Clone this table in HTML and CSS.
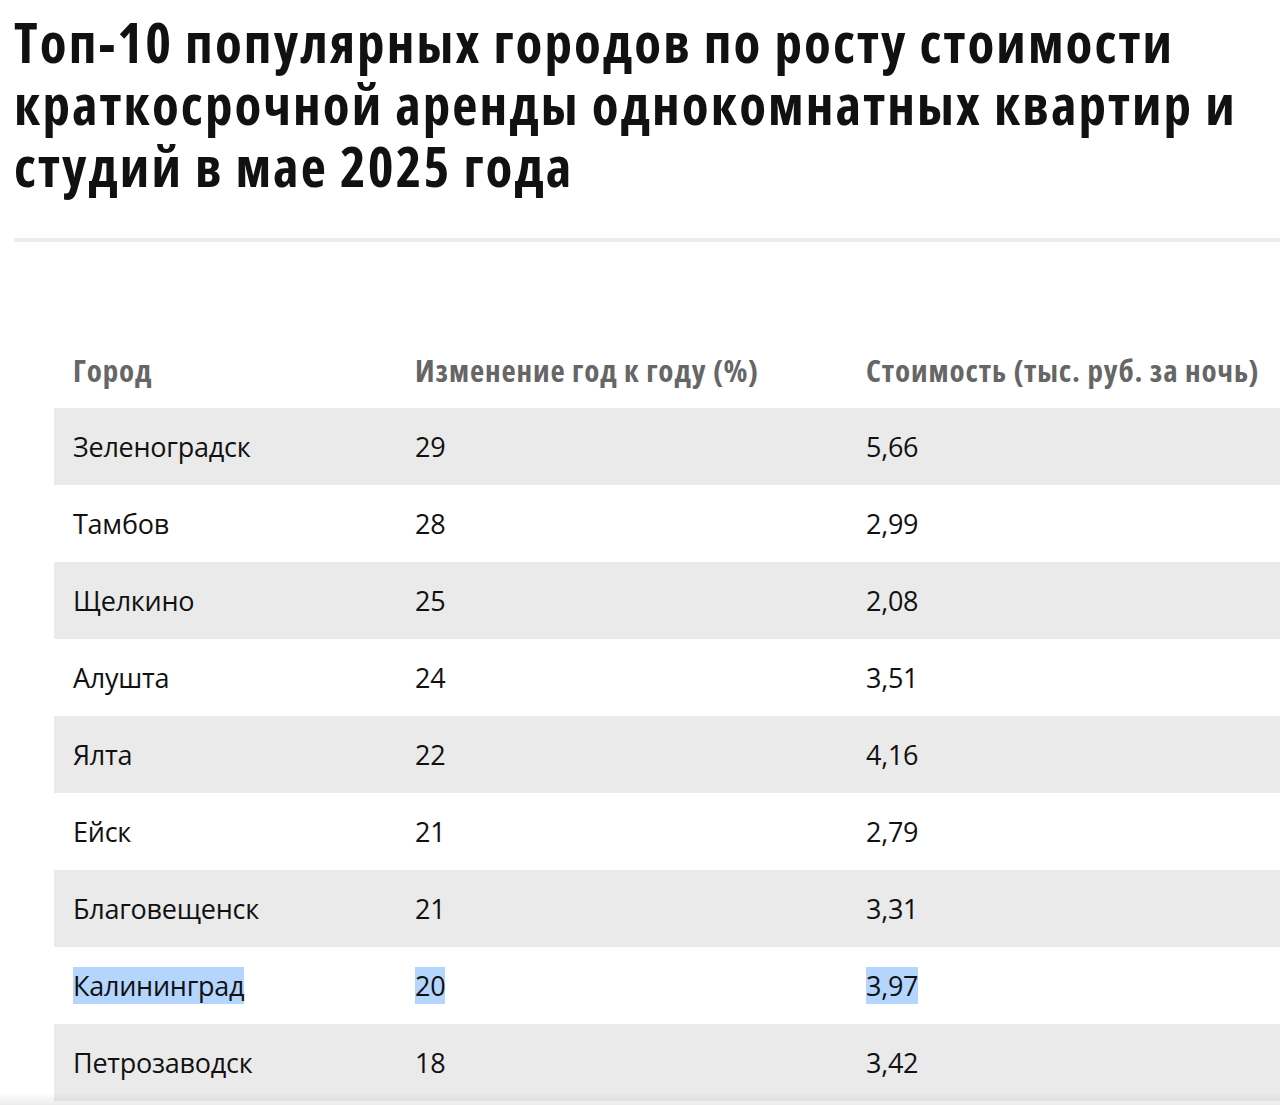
FILE: index.html
```html
<!DOCTYPE html>
<html lang="ru">
<head>
<meta charset="utf-8">
<title>Топ-10 популярных городов</title>
<link rel="stylesheet" href="styles.css">
</head>
<body>
<div class="page">
  <h1 class="title">Топ-10 популярных городов по росту стоимости краткосрочной аренды однокомнатных квартир и студий в мае 2025 года</h1>
  <div class="rule"></div>
  <table class="data">
    <thead>
      <tr><th class="c1">Город</th><th class="c2">Изменение год к году (%)</th><th class="c3">Стоимость (тыс. руб. за ночь)</th></tr>
    </thead>
    <tbody>
      <tr><td>Зеленоградск</td><td>29</td><td>5,66</td></tr>
      <tr><td>Тамбов</td><td>28</td><td>2,99</td></tr>
      <tr><td>Щелкино</td><td>25</td><td>2,08</td></tr>
      <tr><td>Алушта</td><td>24</td><td>3,51</td></tr>
      <tr><td>Ялта</td><td>22</td><td>4,16</td></tr>
      <tr><td>Ейск</td><td>21</td><td>2,79</td></tr>
      <tr><td>Благовещенск</td><td>21</td><td>3,31</td></tr>
      <tr><td><span class="sel">Калининград</span></td><td><span class="sel">20</span></td><td><span class="sel">3,97</span></td></tr>
      <tr><td>Петрозаводск</td><td>18</td><td>3,42</td></tr>
    </tbody>
  </table>
</div>
<div class="fade"></div>
</body>
</html>
```
FILE: styles.css
```css
html, body {
  margin: 0;
  padding: 0;
  background: #ffffff;
  overflow: hidden;
}
body {
  font-family: "Open Sans", "Noto Sans", sans-serif;
  color: #111111;
  width: 1280px;
  height: 1105px;
  position: relative;
}
.page {
  padding: 11px 0 0 14px;
}
.title {
  margin: 0;
  font-size: 55px;
  line-height: 62px;
  font-weight: 700;
  font-stretch: 75%;
  letter-spacing: 2.1px;
  color: #111111;
  width: 1250px;
}
.rule {
  height: 4px;
  background: #ececec;
  margin-top: 41px;
  width: 1300px;
}
.data {
  border-collapse: collapse;
  margin: 90px 0 0 40px;
  width: 1300px;
  table-layout: fixed;
}
.data th, .data td {
  text-align: left;
  padding: 0 0 0 19px;
  vertical-align: middle;
}
.data th {
  height: 76px;
  font-size: 31px;
  font-weight: 700;
  font-stretch: 75%;
  letter-spacing: 0.9px;
  color: #666666;
}
.data td {
  height: 77px;
  font-size: 27px;
  line-height: 39px;
  letter-spacing: -0.25px;
  color: #111111;
}
.c1 { width: 323px; }
.c2 { width: 432px; }
.data tbody tr:nth-child(odd) td {
  background: #eaeaea;
}
.sel {
  background: #b4d5fe;
}
.fade {
  position: absolute;
  left: 0;
  right: 0;
  bottom: 0;
  height: 12px;
  background: linear-gradient(to bottom, rgba(0,0,0,0), rgba(0,0,0,0.08));
}
```
